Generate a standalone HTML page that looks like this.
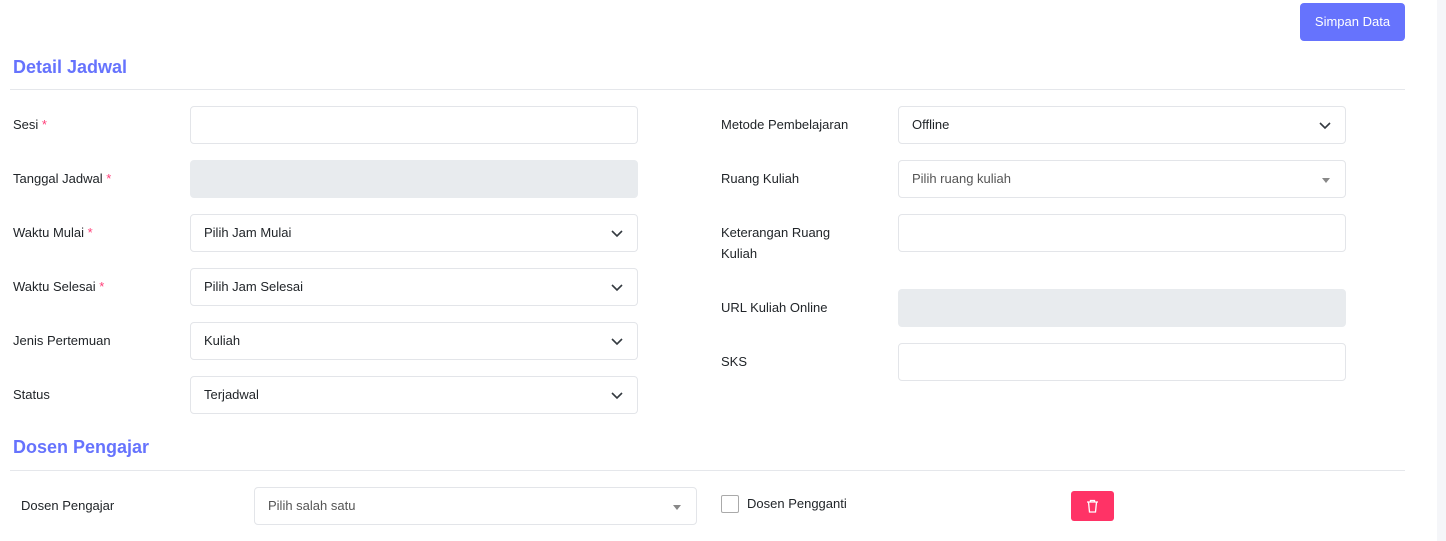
<!DOCTYPE html>
<html><head><style>
body{margin:0;width:1446px;height:541px;background:#fff;font-family:"Liberation Sans",sans-serif;font-size:13px;color:#212529;position:relative;overflow:hidden}
.a{position:absolute}
.sb{right:0;top:0;width:9px;height:541px;background:#f5f6f9}
.btn{left:1300px;top:3px;width:105px;height:38px;background:#6673fd;border-radius:4px;color:#fff;line-height:38px;text-align:center;font-size:13px}
h2{position:absolute;margin:0;font-size:18px;color:#6673fd;font-weight:bold}
.hr{height:1px;background:#e5e7eb;left:10px;width:1395px}
.lbl{line-height:18px}
.req{color:#ff3e78}
.in{box-sizing:border-box;border:1px solid #e3e5e9;border-radius:4px;height:38px;line-height:36px;padding-left:13px;background:#fff}
.dis{background:#e8ebee;border-color:#e8ebee}
.chev{position:absolute;right:14px;top:13px}
.tri{position:absolute;right:15px;top:17px;width:0;height:0;border-left:4px solid transparent;border-right:4px solid transparent;border-top:5px solid #888}
</style></head><body>
<div class="a sb"></div>
<div class="a btn">Simpan Data</div>
<h2 style="left:13px;top:57px">Detail Jadwal</h2>
<div class="a hr" style="top:89px"></div>

<div class="a lbl" style="left:13px;top:116px">Sesi <span class="req">*</span></div>
<div class="a in" style="left:190px;top:106px;width:448px"></div>
<div class="a lbl" style="left:13px;top:170px">Tanggal Jadwal <span class="req">*</span></div>
<div class="a in dis" style="left:190px;top:160px;width:448px"></div>
<div class="a lbl" style="left:13px;top:224px">Waktu Mulai <span class="req">*</span></div>
<div class="a in" style="left:190px;top:214px;width:448px">Pilih Jam Mulai<svg class="chev" width="12" height="10" viewBox="0 0 12 10"><path d="M1 3l5 5 5-5" fill="none" stroke="#343a40" stroke-width="1.6"/></svg></div>
<div class="a lbl" style="left:13px;top:278px">Waktu Selesai <span class="req">*</span></div>
<div class="a in" style="left:190px;top:268px;width:448px">Pilih Jam Selesai<svg class="chev" width="12" height="10" viewBox="0 0 12 10"><path d="M1 3l5 5 5-5" fill="none" stroke="#343a40" stroke-width="1.6"/></svg></div>
<div class="a lbl" style="left:13px;top:332px">Jenis Pertemuan</div>
<div class="a in" style="left:190px;top:322px;width:448px">Kuliah<svg class="chev" width="12" height="10" viewBox="0 0 12 10"><path d="M1 3l5 5 5-5" fill="none" stroke="#343a40" stroke-width="1.6"/></svg></div>
<div class="a lbl" style="left:13px;top:386px">Status</div>
<div class="a in" style="left:190px;top:376px;width:448px">Terjadwal<svg class="chev" width="12" height="10" viewBox="0 0 12 10"><path d="M1 3l5 5 5-5" fill="none" stroke="#343a40" stroke-width="1.6"/></svg></div>

<div class="a lbl" style="left:721px;top:116px">Metode Pembelajaran</div>
<div class="a in" style="left:898px;top:106px;width:448px">Offline<svg class="chev" width="12" height="10" viewBox="0 0 12 10"><path d="M1 3l5 5 5-5" fill="none" stroke="#343a40" stroke-width="1.6"/></svg></div>
<div class="a lbl" style="left:721px;top:170px">Ruang Kuliah</div>
<div class="a in" style="left:898px;top:160px;width:448px;color:#555">Pilih ruang kuliah<div class="tri"></div></div>
<div class="a lbl" style="left:721px;top:222px;line-height:21px">Keterangan Ruang<br>Kuliah</div>
<div class="a in" style="left:898px;top:214px;width:448px"></div>
<div class="a lbl" style="left:721px;top:299px">URL Kuliah Online</div>
<div class="a in dis" style="left:898px;top:289px;width:448px"></div>
<div class="a lbl" style="left:721px;top:353px">SKS</div>
<div class="a in" style="left:898px;top:343px;width:448px"></div>

<h2 style="left:13px;top:437px">Dosen Pengajar</h2>
<div class="a hr" style="top:470px"></div>
<div class="a lbl" style="left:21px;top:497px">Dosen Pengajar</div>
<div class="a in" style="left:254px;top:487px;width:443px;color:#555">Pilih salah satu<div class="tri"></div></div>
<div class="a" style="left:721px;top:495px;width:16px;height:16px;border:1px solid #aaa;border-radius:2px"></div>
<div class="a lbl" style="left:747px;top:495px">Dosen Pengganti</div>
<div class="a" style="left:1071px;top:491px;width:43px;height:30px;background:#ff3366;border-radius:3px">
<svg style="position:absolute;left:15px;top:8px" width="13" height="14" viewBox="0 0 13 14"><path d="M1 3h11M4.5 3V1.5h4V3M2.5 3l1 10h6l1-10" fill="none" stroke="#fff" stroke-width="1.3"/></svg></div>
</body></html>
